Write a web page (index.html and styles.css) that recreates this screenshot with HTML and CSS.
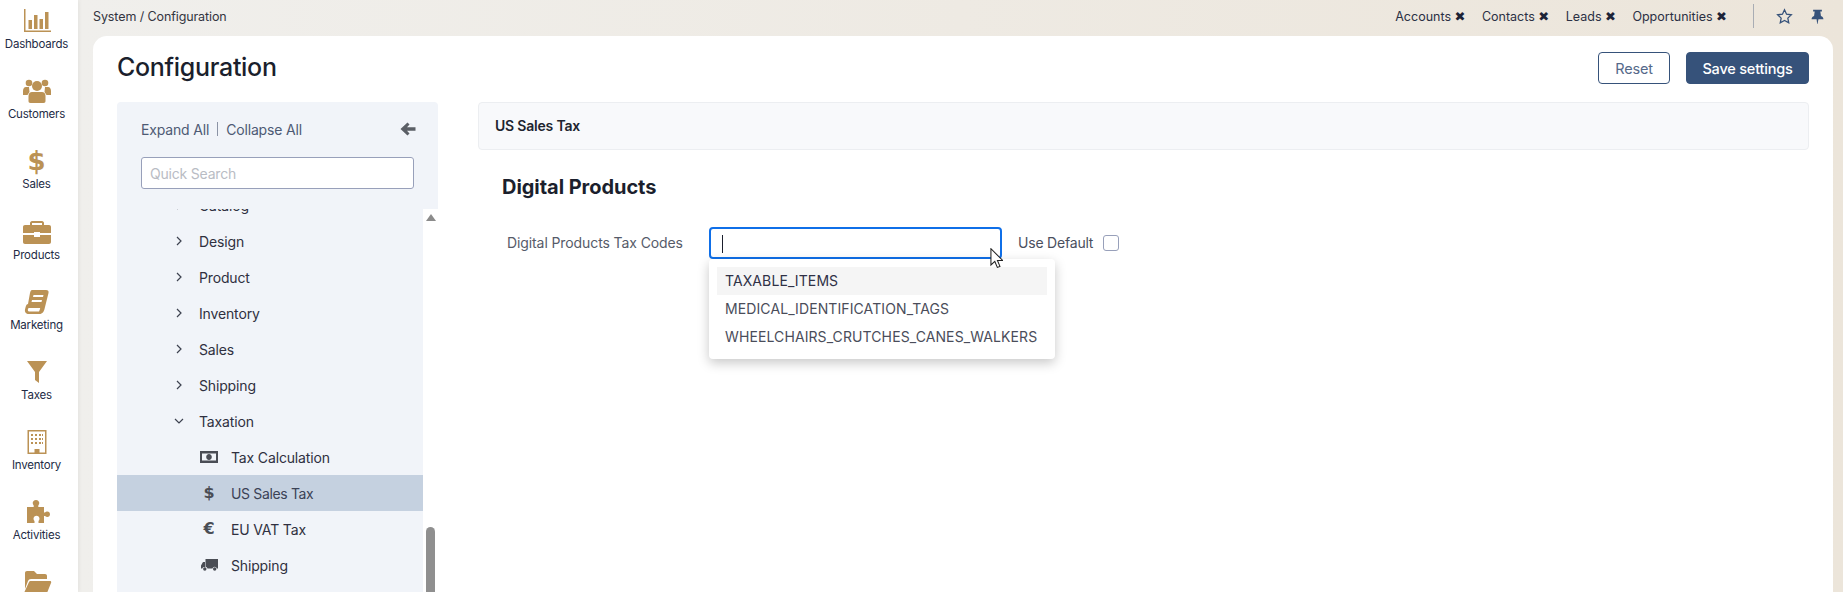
FILE: index.html
```html
<!DOCTYPE html>
<html lang="en">
<head>
<meta charset="utf-8">
<title>Configuration</title>
<link rel="stylesheet" href="styles.css">
</head>
<body>
<div class="app">
  <nav class="rail">
    <a class="rail-item"><svg class="rail-icon" viewBox="0 0 30 24"><path d="M2 0h1.500v21.500H29V23H2z"/><rect x="6.500" y="11" width="3.500" height="9"/><rect x="12" y="6" width="3.500" height="14"/><rect x="17.500" y="10" width="3.500" height="10"/><rect x="23" y="3" width="3.500" height="17"/></svg><span>Dashboards</span></a>
    <a class="rail-item"><svg class="rail-icon" viewBox="0 0 30 24"><circle cx="7" cy="4" r="3.300"/><circle cx="23" cy="4" r="3.300"/><circle cx="15" cy="7" r="5"/><path d="M4 8h3l.5 5-2 3H1v-4c0-2 1-4 3-4zM26 8h-3l-.5 5 2 3H29v-4c0-2-1-4-3-4zM10 13h10c2 0 3.500 1.500 3.500 4v5c0 1-.5 2-2 2h-13c-1.500 0-2-1-2-2v-5c0-2.500 1.500-4 3.500-4z"/></svg><span>Customers</span></a>
    <a class="rail-item"><span class="rail-glyph">$</span><span>Sales</span></a>
    <a class="rail-item"><svg class="rail-icon" viewBox="0 0 30 24"><path d="M10 1h10c1 0 2 1 2 2v2h-2V3H10v2H8V3c0-1 1-2 2-2z"/><path d="M3 5h24c1.200 0 2 .8 2 2v6H18v-1h-6v1H1V7c0-1.200.8-2 2-2zM1 15h11v2h6v-2h11v7c0 1.200-.8 2-2 2H3c-1.200 0-2-.8-2-2z"/></svg><span>Products</span></a>
    <a class="rail-item"><svg class="rail-icon" viewBox="0 0 30 24"><path d="M10 0h14c2 0 3 1 2.500 3l-4 16c-.6 2.500-2 5-5 5H7c-3 0-4.500-2-4-4.500l.5-2c.5-2.500 1.500-3.500 2.500-3.500L8 3c.5-2 1-3 2-3zm1.500 5-.5 2h10l.5-2zm-1.500 5-.5 2h10l.5-2zM7 18c-1.500 0-1.500 3.500 0 3.500h10c.6-1 1-2.500 1.200-3.500z" fill-rule="evenodd"/></svg><span>Marketing</span></a>
    <a class="rail-item"><svg class="rail-icon" viewBox="0 0 30 24"><path d="M5 1h20l-8 11v11l-4-3v-8z"/></svg><span>Taxes</span></a>
    <a class="rail-item"><svg class="rail-icon" viewBox="0 0 30 24"><path fill-rule="evenodd" d="M5.500 0h19v24h-19zM7 1.500V22.500h5.500V19h5v3.500H23V1.500zM9 4h2v2H9zm4 0h2v2h-2zm4 0h2v2h-2zm3 0h1v2h-1zM9 8h2v2H9zm4 0h2v2h-2zm4 0h2v2h-2zm3 0h1v2h-1zM9 12h2v2H9zm4 0h2v2h-2zm4 0h2v2h-2zm3 0h1v2h-1z"/></svg><span>Inventory</span></a>
    <a class="rail-item"><svg class="rail-icon" viewBox="0 0 30 24"><path d="M14 0c2 0 3.300 1.500 3.300 3 0 1-.5 1.800-1 2.500V7H22v5.500h1c.8-.8 1.500-1 2.300-1 1.700 0 2.700 1.300 2.700 2.700s-1 2.800-2.700 2.800c-.8 0-1.500-.3-2.300-1h-1V23h-5.500v-2c.6-.7 1-1.400 1-2.200 0-1.800-1.500-3-3-3s-3 1.200-3 3c0 .8.400 1.500 1 2.200v2H5V7h6.700V5.500c-.6-.7-1-1.500-1-2.500 0-1.500 1.300-3 3.300-3z"/></svg><span>Activities</span></a>
    <a class="rail-item"><svg class="rail-icon" viewBox="0 0 30 24"><path d="M5 0h7l3 3h8c1.200 0 2 .8 2 2v3H9c-1.500 0-2.500.7-3 2L3 18V2c0-1.200.8-2 2-2zM9 10h19c1 0 1.500 1 1 2l-4 10c-.4.800-1 2-3 2H3c-1 0-1.500-1-1-2l5-11c.4-.7 1-1 2-1z"/></svg></a>
  </nav>
  <div class="workspace">
    <header class="topbar">
      <div class="crumbs">System / Configuration</div>
      <div class="quick">
        <span class="tab">Accounts <b>✖</b></span>
        <span class="tab">Contacts <b>✖</b></span>
        <span class="tab">Leads <b>✖</b></span>
        <span class="tab">Opportunities <b>✖</b></span>
        <i class="divider"></i>
        <svg class="star" viewBox="0 0 24 24"><path d="M12 2.500l2.900 6.200 6.800.9-5 4.700 1.300 6.700-6-3.300-6 3.300 1.300-6.700-5-4.700 6.800-.9z"/></svg>
        <svg class="pin" viewBox="0 0 24 24"><path d="M5 1h14v3h-2.500l1 7c2.500 1 4 3 4 5.500h-8L12 24h-.5l-1-7.500h-8c0-2.500 1.500-4.500 4-5.500l1-7H5z"/></svg>
      </div>
    </header>
    <main class="panel">
      <div class="page-head">
        <h1>Configuration</h1>
        <div class="actions">
          <button class="btn btn-ghost">Reset</button>
          <button class="btn btn-primary">Save settings</button>
        </div>
      </div>
      <div class="columns">
        <aside class="tree-panel">
          <div class="tree-tools">
            <div class="tree-links"><span>Expand All</span><i></i><span>Collapse All</span></div>
            <svg class="back" viewBox="0 0 16 14"><path d="M7.500.5l2 2L7 5.200H15.500v3.600H7l2.500 2.700-2 2L.5 7z"/></svg>
          </div>
          <div class="search">Quick Search</div>
          <div class="tree-view">
            <ul class="tree">
              <li class="node"><svg class="chev" viewBox="0 0 10 10"><path d="M3 1l4 4-4 4"/></svg>Catalog</li>
              <li class="node"><svg class="chev" viewBox="0 0 10 10"><path d="M3 1l4 4-4 4"/></svg>Design</li>
              <li class="node"><svg class="chev" viewBox="0 0 10 10"><path d="M3 1l4 4-4 4"/></svg>Product</li>
              <li class="node"><svg class="chev" viewBox="0 0 10 10"><path d="M3 1l4 4-4 4"/></svg>Inventory</li>
              <li class="node"><svg class="chev" viewBox="0 0 10 10"><path d="M3 1l4 4-4 4"/></svg>Sales</li>
              <li class="node"><svg class="chev" viewBox="0 0 10 10"><path d="M3 1l4 4-4 4"/></svg>Shipping</li>
              <li class="node"><svg class="chev" viewBox="0 0 10 10"><path d="M1 3l4 4 4-4"/></svg>Taxation</li>
              <li class="leaf"><span class="leaf-icon"><svg class="leaf-svg" viewBox="0 0 18 12"><path fill-rule="evenodd" d="M0 0h18v12H0zm2 2.500v7h14v-7zM9 3c1.700 0 2.800 1.400 2.800 3S10.700 9 9 9 6.200 7.600 6.200 6 7.300 3 9 3z"/></svg></span>Tax Calculation</li>
              <li class="leaf leaf-active"><span class="leaf-icon glyph">$</span>US Sales Tax</li>
              <li class="leaf"><span class="leaf-icon glyph">€</span>EU VAT Tax</li>
              <li class="leaf"><span class="leaf-icon"><svg class="leaf-svg" viewBox="0 0 18 12"><path d="M6 0h12v9.500h-1.200a2.200 2.200 0 0 0-4.300 0H7.500a2.200 2.200 0 0 0-2-1.700V0zM5 3v5.200a2.200 2.200 0 0 0-2.700 1.300H1V6.500L3 3z"/><circle cx="4.800" cy="10" r="1.700"/><circle cx="14.700" cy="10" r="1.700"/></svg></span>Shipping</li>
            </ul>
            <div class="scrollbar">
              <i class="scroll-up"></i>
              <i class="scroll-thumb"></i>
            </div>
          </div>
        </aside>
        <section class="content">
          <div class="section-bar">US Sales Tax</div>
          <div class="group">
            <h2>Digital Products</h2>
            <div class="field">
              <label class="field-label">Digital Products Tax Codes</label>
              <div class="combo">
                <div class="combo-input"><i class="caret"></i></div>
                <ul class="menu">
                  <li class="menu-item menu-item-hover">TAXABLE_ITEMS</li>
                  <li class="menu-item">MEDICAL_IDENTIFICATION_TAGS</li>
                  <li class="menu-item">WHEELCHAIRS_CRUTCHES_CANES_WALKERS</li>
                </ul>
                <svg class="cursor" viewBox="0 0 12 20"><path d="M.7.700v15.500l3.700-3.400 2.400 5.700 2.500-1-2.400-5.600h5z"/></svg>
              </div>
              <span class="default-label">Use Default</span>
              <i class="check"></i>
            </div>
          </div>
        </section>
      </div>
    </main>
  </div>
</div>
</body>
</html>
```
FILE: styles.css
```css
* { box-sizing: border-box; }
html, body { margin: 0; height: 100%; overflow: hidden; }
body { font-family: Inter, "Noto Sans", sans-serif; color: #2c3040; background: #fff; font-size: 14px; }
ul { list-style: none; margin: 0; padding: 0; }
i { font-style: normal; display: block; }

.app { display: flex; height: 592px; width: 1843px; overflow: hidden; }

.rail { width: 78px; flex: none; background: #fff; display: flex; flex-direction: column; align-items: center; padding: 9px 5px 0 0; box-shadow: 1px 0 4px rgba(0,0,0,.06); z-index: 1; }
.rail-item { height: 70.200px; flex: none; width: 100%; display: flex; flex-direction: column; align-items: center; font-size: 11.500px; letter-spacing: -.2px; color: #232b45; white-space: nowrap; }
.rail-icon { width: 30px; height: 24px; fill: #bb9255; margin-bottom: 4px; flex: none; }
.rail-glyph { height: 24px; margin-bottom: 4px; font: 700 26px/24px "DejaVu Sans", sans-serif; color: #bb9255; }

.workspace { flex: 1; min-width: 0; display: flex; flex-direction: column; background: linear-gradient(90deg, #f0efec, #ece5da); padding-left: 15px; }
.topbar { height: 36px; flex: none; display: flex; align-items: center; justify-content: space-between; padding: 0 18px 4px 0; font-size: 12.500px; color: #2b3044; }
.crumbs { color: #33353f; letter-spacing: -.1px; }
.quick { display: flex; align-items: center; }
.tab { margin-right: 16.500px; white-space: nowrap; }
.tab b { font: 400 13px "DejaVu Sans", sans-serif; color: #1d2336; }
.tab:nth-of-type(4) { margin-right: 0; }
.divider { width: 1px; height: 24px; background: #a9adb4; margin: 0 22px 0 26px; }
.star { width: 17px; height: 17px; fill: none; stroke: #36527a; stroke-width: 1.800; margin-right: 17px; }
.pin { width: 15px; height: 17px; fill: #36527a; }

.panel { flex: 1; min-height: 0; margin-right: 10px; background: #fff; border-radius: 14px 14px 0 0; padding: 16px 24px 0; display: flex; flex-direction: column; }
.page-head { display: flex; justify-content: space-between; align-items: center; height: 32px; margin-bottom: 18px; }
h1 { margin: -2px 0 0; font-size: 25px; font-weight: 500; letter-spacing: -.3px; color: #1b1f2d; }
.actions { display: flex; gap: 16px; }
.btn { height: 32px; border-radius: 4px; font: 500 14.500px Inter, sans-serif; letter-spacing: -.2px; padding: 0; }
.btn-ghost { width: 72px; background: #fff; border: 1px solid #36527a; color: #55698a; font-weight: 400; }
.btn-primary { width: 123px; background: #36527a; border: 1px solid #36527a; color: #fff; }

.columns { flex: 1; min-height: 0; display: flex; gap: 40px; }
.tree-panel { width: 321px; flex: none; background: #f1f4f9; border-radius: 4px 4px 0 0; padding-top: 18px; display: flex; flex-direction: column; overflow: hidden; }
.tree-tools { display: flex; justify-content: space-between; align-items: center; height: 18px; padding: 0 22px 0 24px; }
.tree-links { display: flex; align-items: center; font-size: 14px; letter-spacing: -.17px; color: #4d5a74; }
.tree-links i { width: 1px; height: 14px; background: #8b93a5; margin: 0 8px; }
.back { width: 16px; height: 14px; fill: #5b5f66; }
.search { margin: 19px 24px 0; width: 273px; height: 32px; flex: none; background: #fff; border: 1px solid #98a0ba; border-radius: 3px; padding: 0 8px; line-height: 32px; font-size: 14px; letter-spacing: -.2px; color: #b9bcc4; }
.tree-view { position: relative; flex: 1; min-height: 0; margin-top: 20px; overflow: hidden; }
.tree { margin: -22px 15px 0 0; font-size: 14px; letter-spacing: -.15px; color: #2f3040; }
.node { height: 36px; display: flex; align-items: center; padding-left: 57px; }
.chev { width: 10px; height: 10px; fill: none; stroke: #3d4250; stroke-width: 1.200; margin-right: 15px; flex: none; }
.leaf { height: 36px; display: flex; align-items: center; padding-left: 83px; }
.leaf-active { background: #c5d1e0; color: #3b4256; letter-spacing: -.35px; }
.leaf-icon { width: 18px; height: 14px; margin-right: 13px; display: flex; align-items: center; justify-content: center; color: #4a4d55; }
.glyph { font: 700 16px/14px "DejaVu Sans", sans-serif; }
.leaf-svg { width: 18px; height: 12px; fill: #4a4d55; }
.scrollbar { position: absolute; right: 0; top: 0; bottom: 0; width: 15px; background: #fff; }
.scroll-up { position: absolute; left: 3px; top: 5px; width: 0; height: 0; border: 5px solid transparent; border-top: 0; border-bottom: 7px solid #8b8b8b; }
.scroll-thumb { position: absolute; left: 3px; top: 318px; width: 9px; height: 80px; background: #8f8f8f; border-radius: 5px; }

.content { flex: 1; min-width: 0; }
.section-bar { height: 48px; background: #f8f9fb; border: 1px solid #eceef1; border-radius: 4px; padding-left: 16px; line-height: 46px; font-size: 14px; font-weight: 600; letter-spacing: -.2px; color: #20242f; }
.group { padding: 24px 0 0 24px; }
h2 { margin: 0 0 27px; font-size: 20px; line-height: 26px; font-weight: 700; letter-spacing: -.05px; color: #1b1f2d; }
.field { display: flex; align-items: flex-start; }
.field-label { width: 207px; padding-left: 5px; line-height: 32px; font-size: 14px; letter-spacing: -.1px; color: #565b69; }
.combo { position: relative; width: 293px; height: 32px; margin-right: 16px; }
.combo-input { height: 32px; border: 2px solid #0f6fe8; border-radius: 4px; background: #fff; padding: 6px 11px; }
.caret { width: 1px; height: 18px; background: #1b1f2d; }
.menu { position: absolute; left: 0; top: 32px; width: 346px; padding: 8px; background: #fff; border-radius: 4px; box-shadow: 0 4px 12px rgba(0,0,0,.22); z-index: 3; font-size: 14px; letter-spacing: .1px; color: #4a4d5a; }
.menu-item { height: 28px; line-height: 28px; padding-left: 8px; white-space: nowrap; }
.menu-item-hover { background: #f5f5f5; color: #2f3146; }
.cursor { position: absolute; left: 281px; top: 21px; width: 13px; height: 21px; fill: #fff; stroke: #222; stroke-width: 1; z-index: 4; }
.default-label { line-height: 32px; font-size: 14px; letter-spacing: -.2px; color: #4a4f5e; margin-right: 10px; }
.check { width: 16px; height: 16px; margin-top: 8px; background: #fff; border: 1px solid #98a0ba; border-radius: 3px; }
```
